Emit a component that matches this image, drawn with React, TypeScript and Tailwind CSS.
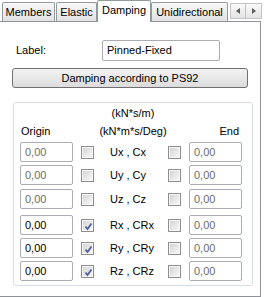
import React from "react";

type Row = { label: string; origin: string; checkedLeft: boolean; enabled: boolean; gap: string };

const ROWS: Row[] = [
  { label: "Ux , Cx", origin: "0,00", checkedLeft: false, enabled: false, gap: "mt-[4px]" },
  { label: "Uy , Cy", origin: "0,00", checkedLeft: false, enabled: false, gap: "mt-[3px]" },
  { label: "Uz , Cz", origin: "0,00", checkedLeft: false, enabled: false, gap: "mt-[4px]" },
  { label: "Rx , CRx", origin: "0,00", checkedLeft: true, enabled: true, gap: "mt-[6px]" },
  { label: "Ry , CRy", origin: "0,00", checkedLeft: true, enabled: true, gap: "mt-[3px]" },
  { label: "Rz , CRz", origin: "0,00", checkedLeft: true, enabled: true, gap: "mt-[3px]" },
];

function CheckBox({ checked }: { checked: boolean }) {
  return (
    <div className="w-[13px] h-[13px] shrink-0 border border-[#8e8f8f] bg-[#f6f6f6] p-px">
      <div className="relative w-full h-full bg-gradient-to-br from-[#d4d4d4] to-[#f8f8f8]">
        {checked && (
          <svg viewBox="0 0 11 11" className="absolute inset-0 w-[11px] h-[11px]">
            <path d="M2.5 5.5 L4.5 8 L8.5 2.5" fill="none" stroke="#4f5f98" strokeWidth="1.8" />
          </svg>
        )}
      </div>
    </div>
  );
}

function ValueBox({ value, enabled }: { value: string; enabled: boolean }) {
  return (
    <div
      className={`w-[53px] h-[20px] shrink-0 flex items-center pl-[4px] border border-[#abadb3] rounded-[2px] bg-white ${
        enabled ? "text-black" : "text-[#6d6d6d]"
      }`}
    >
      {value}
    </div>
  );
}

function Tab({ label, width }: { label: string; width: string }) {
  return (
    <div
      className={`${width} h-[19px] flex items-center justify-center border border-b-0 border-[#919b9c] bg-gradient-to-b from-[#f7f7f7] to-[#e2e2e2] rounded-t-[2px]`}
    >
      {label}
    </div>
  );
}

export default function App() {
  return (
    <div className="w-[264px] h-[297px] bg-white text-[11px] leading-[13px] text-black font-['Liberation_Sans',Arial,sans-serif] overflow-hidden">
      <div className="flex items-end h-[21px] pl-[2px]">
        <Tab label="Members" width="w-[53px]" />
        <div className="w-px" />
        <Tab label="Elastic" width="w-[41px]" />
        <div className="w-[54px] h-[22px] -mb-px z-10 flex items-center justify-center pb-[2px] border border-b-0 border-[#919b9c] bg-white rounded-t-[2px]">
          Damping
        </div>
        <Tab label="Unidirectional" width="w-[77px]" />
        <div className="self-start mt-[3px] ml-[2px] flex h-[16px]">
          <div className="w-[16px] h-full flex items-center justify-center border border-[#c3c3c3] bg-gradient-to-b from-[#fafafa] to-[#e4e4e4]">
            <svg viewBox="0 0 4 6" className="w-[4px] h-[6px]">
              <path d="M4 0 L0 3 L4 6 Z" fill="#5c5c5c" />
            </svg>
          </div>
          <div className="w-[16px] h-full flex items-center justify-center border border-l-0 border-[#c3c3c3] bg-gradient-to-b from-[#fafafa] to-[#e4e4e4]">
            <svg viewBox="0 0 4 6" className="w-[4px] h-[6px]">
              <path d="M0 0 L4 3 L0 6 Z" fill="#5c5c5c" />
            </svg>
          </div>
        </div>
      </div>

      <div className="w-[261px] h-[276px] border-t border-r border-b border-[#8e9195] flex flex-col">
        <div className="flex items-center mt-[18px] h-[21px]">
          <span className="w-[102px] pl-[16px]">Label:</span>
          <div className="w-[118px] h-[21px] flex items-center pl-[4px] border border-[#abadb3] rounded-[2px]">
            Pinned-Fixed
          </div>
        </div>

        <button className="ml-[12px] mt-[7px] w-[236px] h-[20px] flex items-center justify-center border border-[#707070] rounded-[3px] bg-gradient-to-b from-[#f3f3f3] to-[#dcdcdc]">
          Damping according to PS92
        </button>

        <div className="ml-[13px] mt-[14px] w-[240px] border border-[#d5dfe5] rounded-[3px] pt-[3px] pb-[4px] flex flex-col">
          <div className="h-[14px] leading-[14px] text-center">(kN*s/m)</div>
          <div className="mt-[4px] h-[14px] leading-[14px] grid grid-cols-[1fr_auto_1fr]">
            <span className="pl-[7px]">Origin</span>
            <span>(kN*m*s/Deg)</span>
            <span className="text-right pr-[13px]">End</span>
          </div>
          {ROWS.map((row) => (
            <div key={row.label} className={`${row.gap} h-[20px] flex items-center pl-[6px]`}>
              <ValueBox value={row.origin} enabled={row.enabled} />
              <div className="ml-[8px]">
                <CheckBox checked={row.checkedLeft} />
              </div>
              <span className="ml-[16px] w-[58px]">{row.label}</span>
              <CheckBox checked={false} />
              <div className="ml-[8px]">
                <ValueBox value="0,00" enabled={false} />
              </div>
            </div>
          ))}
        </div>
      </div>
    </div>
  );
}
